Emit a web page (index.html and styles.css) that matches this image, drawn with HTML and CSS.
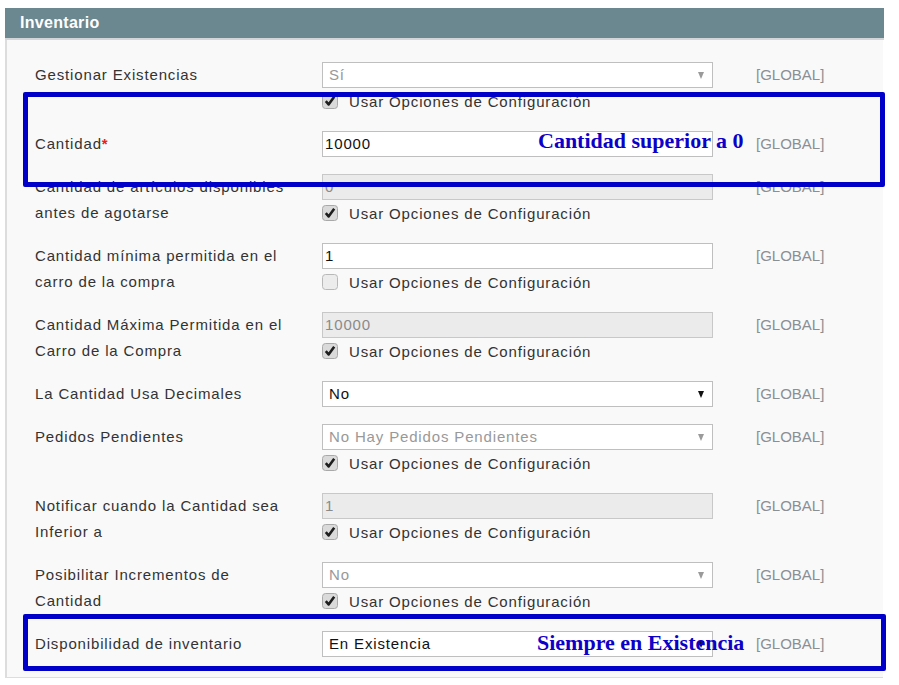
FILE: index.html
```html
<!DOCTYPE html>
<html lang="es">
<head>
<meta charset="utf-8">
<title>Inventario</title>
<link rel="stylesheet" href="styles.css">
</head>
<body>
<div class="panel">
  <div class="panel-head">Inventario</div>
  <div class="panel-body">

    <div class="row">
      <div class="label">Gestionar Existencias</div>
      <div class="field">
        <div class="select off"><span>Sí</span><i class="arrow"></i></div>
        <div class="use"><svg class="cb" viewBox="0 0 16 16"><rect x="0.5" y="0.5" width="15" height="15" rx="3" class="box-on"/><path d="M3.8 8.2 L6.6 11.4 L12.2 3.8" class="tick"/></svg><span>Usar Opciones de Configuración</span></div>
      </div>
      <div class="scope">[GLOBAL]</div>
    </div>

    <div class="row">
      <div class="label">Cantidad<span class="req">*</span></div>
      <div class="field">
        <div class="input">10000</div>
      </div>
      <div class="scope">[GLOBAL]</div>
    </div>

    <div class="row">
      <div class="label">Cantidad de artículos disponibles<br>antes de agotarse</div>
      <div class="field">
        <div class="input off">0</div>
        <div class="use"><svg class="cb" viewBox="0 0 16 16"><rect x="0.5" y="0.5" width="15" height="15" rx="3" class="box-on"/><path d="M3.8 8.2 L6.6 11.4 L12.2 3.8" class="tick"/></svg><span>Usar Opciones de Configuración</span></div>
      </div>
      <div class="scope">[GLOBAL]</div>
    </div>

    <div class="row">
      <div class="label">Cantidad mínima permitida en el<br>carro de la compra</div>
      <div class="field">
        <div class="input">1</div>
        <div class="use"><svg class="cb" viewBox="0 0 16 16"><rect x="0.5" y="0.5" width="15" height="15" rx="3" class="box-off"/></svg><span>Usar Opciones de Configuración</span></div>
      </div>
      <div class="scope">[GLOBAL]</div>
    </div>

    <div class="row">
      <div class="label">Cantidad Máxima Permitida en el<br>Carro de la Compra</div>
      <div class="field">
        <div class="input off">10000</div>
        <div class="use"><svg class="cb" viewBox="0 0 16 16"><rect x="0.5" y="0.5" width="15" height="15" rx="3" class="box-on"/><path d="M3.8 8.2 L6.6 11.4 L12.2 3.8" class="tick"/></svg><span>Usar Opciones de Configuración</span></div>
      </div>
      <div class="scope">[GLOBAL]</div>
    </div>

    <div class="row">
      <div class="label">La Cantidad Usa Decimales</div>
      <div class="field">
        <div class="select"><span>No</span><i class="arrow"></i></div>
      </div>
      <div class="scope">[GLOBAL]</div>
    </div>

    <div class="row">
      <div class="label">Pedidos Pendientes</div>
      <div class="field">
        <div class="select off"><span>No Hay Pedidos Pendientes</span><i class="arrow"></i></div>
        <div class="use"><svg class="cb" viewBox="0 0 16 16"><rect x="0.5" y="0.5" width="15" height="15" rx="3" class="box-on"/><path d="M3.8 8.2 L6.6 11.4 L12.2 3.8" class="tick"/></svg><span>Usar Opciones de Configuración</span></div>
      </div>
      <div class="scope">[GLOBAL]</div>
    </div>

    <div class="row">
      <div class="label">Notificar cuando la Cantidad sea<br>Inferior a</div>
      <div class="field">
        <div class="input off">1</div>
        <div class="use"><svg class="cb" viewBox="0 0 16 16"><rect x="0.5" y="0.5" width="15" height="15" rx="3" class="box-on"/><path d="M3.8 8.2 L6.6 11.4 L12.2 3.8" class="tick"/></svg><span>Usar Opciones de Configuración</span></div>
      </div>
      <div class="scope">[GLOBAL]</div>
    </div>

    <div class="row">
      <div class="label">Posibilitar Incrementos de<br>Cantidad</div>
      <div class="field">
        <div class="select off"><span>No</span><i class="arrow"></i></div>
        <div class="use"><svg class="cb" viewBox="0 0 16 16"><rect x="0.5" y="0.5" width="15" height="15" rx="3" class="box-on"/><path d="M3.8 8.2 L6.6 11.4 L12.2 3.8" class="tick"/></svg><span>Usar Opciones de Configuración</span></div>
      </div>
      <div class="scope">[GLOBAL]</div>
    </div>

    <div class="row">
      <div class="label">Disponibilidad de inventario</div>
      <div class="field">
        <div class="select"><span>En Existencia</span><i class="arrow"></i></div>
      </div>
      <div class="scope">[GLOBAL]</div>
    </div>

  </div>
</div>

<div class="mark mark-1"></div>
<div class="note note-1">Cantidad superior a 0</div>
<div class="mark mark-2"></div>
<div class="note note-2">Siempre en Existencia</div>
</body>
</html>
```

FILE: styles.css
```css
html, body {
  margin: 0;
  padding: 0;
  background: #ffffff;
}

body {
  font-family: "Liberation Sans", Arial, sans-serif;
  font-size: 15px;
  color: #333333;
  position: relative;
  width: 899px;
  height: 685px;
  overflow: hidden;
}

.panel {
  margin: 8px 0 0 5px;
  width: 879px;
}

.panel-head {
  height: 30px;
  background: #6b8790;
  border-bottom: 2px solid #d3d6d8;
  color: #ffffff;
  font-weight: bold;
  font-size: 16px;
  letter-spacing: 0.3px;
  line-height: 30px;
  padding-left: 15px;
}

.panel-body {
  background: #f9f9f9;
  border-left: 2px solid #dddddd;
  border-bottom: 1px solid #dddddd;
  padding: 22px 0 3px 28px;
  box-sizing: border-box;
  width: 878px;
}

.row {
  display: grid;
  grid-template-columns: 287px 391px auto;
  padding-bottom: 17px;
}

.label {
  height: 26px;
  line-height: 26px;
  letter-spacing: 0.85px;
  color: #333333;
  white-space: nowrap;
}

.req {
  color: #e8241a;
  font-weight: bold;
}

.field {
  display: flex;
  flex-direction: column;
}

.input,
.select {
  box-sizing: border-box;
  height: 26px;
  line-height: 24px;
  border: 1px solid #bfbfbf;
  background: #ffffff;
  color: #111111;
  letter-spacing: 0.85px;
  white-space: nowrap;
}

.input {
  padding-left: 2px;
}

.input.off {
  background: #ebebeb;
  color: #8a8a8a;
  border-color: #c8c8c8;
}

.select {
  display: flex;
  align-items: center;
  justify-content: space-between;
  padding: 0 8px 0 6px;
}

.select.off {
  color: #999999;
}

.arrow {
  width: 0;
  height: 0;
  border-left: 3.5px solid transparent;
  border-right: 3.5px solid transparent;
  border-top: 7px solid #111111;
}

.select.off .arrow {
  border-top-color: #9a9a9a;
}

.use {
  display: flex;
  align-items: center;
  height: 26px;
  letter-spacing: 0.85px;
  color: #333333;
  white-space: nowrap;
}

.cb {
  width: 16px;
  height: 16px;
  margin-right: 11px;
  flex: none;
}

.box-on {
  fill: #dadada;
  stroke: #a9a9a9;
}

.box-off {
  fill: #ececec;
  stroke: #b8b8b8;
}

.tick {
  fill: none;
  stroke: #1e1e1e;
  stroke-width: 2.6;
  stroke-linejoin: round;
}

.scope {
  margin-left: 43px;
  line-height: 26px;
  color: #8a8f94;
  white-space: nowrap;
}

/* annotation overlays */
.mark {
  position: absolute;
  box-sizing: border-box;
  border: 5px solid #0000c8;
  border-radius: 2px;
}

.mark-1 {
  left: 23px;
  top: 92px;
  width: 862px;
  height: 95px;
}

.mark-2 {
  left: 23px;
  top: 614px;
  width: 863px;
  height: 57px;
}

.note {
  position: absolute;
  font-family: "Liberation Serif", "Times New Roman", serif;
  font-weight: bold;
  font-size: 22px;
  line-height: 22px;
  color: #0d00c8;
  white-space: nowrap;
}

.note-1 {
  left: 538px;
  top: 130px;
}

.note-2 {
  left: 537px;
  top: 632px;
}
```
